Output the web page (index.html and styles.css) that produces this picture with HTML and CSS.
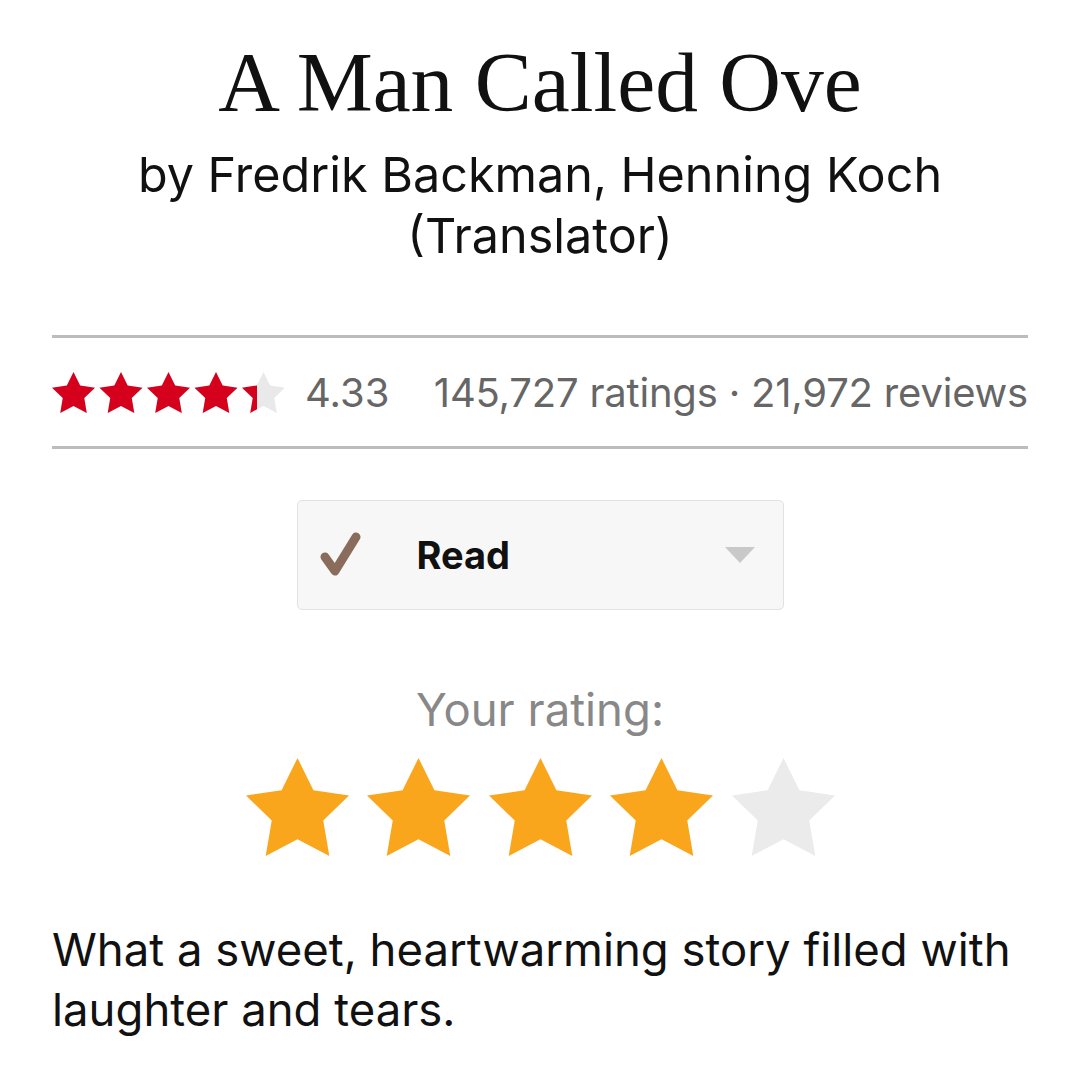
FILE: index.html
```html
<!DOCTYPE html>
<html>
<head>
<meta charset="utf-8">
<link rel="stylesheet" href="styles.css">
</head>
<body>
<div class="page">
  <h1 class="title">A Man Called Ove</h1>
  <p class="authors">by Fredrik Backman, Henning Koch<br>(Translator)</p>

  <div class="stats">
    <svg class="avg-stars" width="232" height="41" viewBox="0 0 232 41">
      <defs>
        <polygon id="ss" points="12,2 15.09,8.26 22,9.27 17,14.14 18.18,21.02 12,17.77 5.82,21.02 7,14.14 2,9.27 8.91,8.26"/>
        <clipPath id="fillclip"><rect x="0" y="0" width="205" height="41"/></clipPath>
      </defs>
      <g fill="#e9e9e9">
        <use href="#ss" transform="translate(-4.3,-4.3) scale(2.15)"/>
        <use href="#ss" transform="translate(43.2,-4.3) scale(2.15)"/>
        <use href="#ss" transform="translate(90.7,-4.3) scale(2.15)"/>
        <use href="#ss" transform="translate(138.2,-4.3) scale(2.15)"/>
        <use href="#ss" transform="translate(185.7,-4.3) scale(2.15)"/>
      </g>
      <g fill="#d5001c" clip-path="url(#fillclip)">
        <use href="#ss" transform="translate(-4.3,-4.3) scale(2.15)"/>
        <use href="#ss" transform="translate(43.2,-4.3) scale(2.15)"/>
        <use href="#ss" transform="translate(90.7,-4.3) scale(2.15)"/>
        <use href="#ss" transform="translate(138.2,-4.3) scale(2.15)"/>
        <use href="#ss" transform="translate(185.7,-4.3) scale(2.15)"/>
      </g>
    </svg>
    <span class="avg">4.33</span>
    <span class="counts">145,727 ratings · 21,972 reviews</span>
  </div>

  <div class="shelf-wrap">
    <div class="shelf">
      <svg class="check" width="44" height="48" viewBox="0 0 44 48">
        <path d="M6 26 L16 40 L37 6" fill="none" stroke="#8a6c5c" stroke-width="9" stroke-linecap="round" stroke-linejoin="round"/>
      </svg>
      <span class="shelf-name">Read</span>
      <svg class="caret" width="30" height="16" viewBox="0 0 30 16">
        <polygon points="0,0 30,0 15,16" fill="#c9c9c9"/>
      </svg>
    </div>
  </div>

  <p class="your-label">Your rating:</p>
  <div class="your-stars">
    <svg class="big-star on" viewBox="2 2 20 19.02" preserveAspectRatio="none"><polygon points="12,2 15.09,8.26 22,9.27 17,14.14 18.18,21.02 12,17.77 5.82,21.02 7,14.14 2,9.27 8.91,8.26"/></svg>
    <svg class="big-star on" viewBox="2 2 20 19.02" preserveAspectRatio="none"><polygon points="12,2 15.09,8.26 22,9.27 17,14.14 18.18,21.02 12,17.77 5.82,21.02 7,14.14 2,9.27 8.91,8.26"/></svg>
    <svg class="big-star on" viewBox="2 2 20 19.02" preserveAspectRatio="none"><polygon points="12,2 15.09,8.26 22,9.27 17,14.14 18.18,21.02 12,17.77 5.82,21.02 7,14.14 2,9.27 8.91,8.26"/></svg>
    <svg class="big-star on" viewBox="2 2 20 19.02" preserveAspectRatio="none"><polygon points="12,2 15.09,8.26 22,9.27 17,14.14 18.18,21.02 12,17.77 5.82,21.02 7,14.14 2,9.27 8.91,8.26"/></svg>
    <svg class="big-star off" viewBox="2 2 20 19.02" preserveAspectRatio="none"><polygon points="12,2 15.09,8.26 22,9.27 17,14.14 18.18,21.02 12,17.77 5.82,21.02 7,14.14 2,9.27 8.91,8.26"/></svg>
  </div>

  <p class="review">What a sweet, heartwarming story filled with laughter and tears.</p>
</div>
</body>
</html>
```

FILE: styles.css
```css
html, body {
  margin: 0;
  padding: 0;
  background: #ffffff;
}

body {
  font-family: Inter, "Noto Sans", sans-serif;
  color: #111111;
}

.page {
  padding: 32px 52px 0;
}

.title {
  margin: 0;
  font-family: "Liberation Serif", "Times New Roman", serif;
  font-weight: normal;
  font-size: 85.5px;
  line-height: 100px;
  text-align: center;
  color: #111;
}

.authors {
  margin: 12px 0 0;
  font-size: 48.5px;
  line-height: 61px;
  text-align: center;
  color: #111;
}

.stats {
  margin-top: 69px;
  border-top: 3px solid #bcbcbc;
  border-bottom: 3px solid #bcbcbc;
  height: 108px;
  display: flex;
  align-items: center;
  color: #666666;
  font-size: 40px;
}

.avg-stars {
  display: block;
  flex: none;
}

.avg {
  margin-left: 21px;
}

.counts {
  margin-left: auto;
  letter-spacing: -0.2px;
}

.shelf-wrap {
  display: flex;
  justify-content: center;
  margin-top: 51px;
}

.shelf {
  width: 485px;
  height: 108px;
  background: #f7f7f7;
  border: 1px solid #e2e2e2;
  border-radius: 5px;
  display: flex;
  align-items: center;
  box-sizing: content-box;
}

.check {
  display: block;
  margin-left: 21px;
}

.shelf-name {
  margin-left: 54px;
  font-weight: 700;
  font-size: 38px;
  color: #111;
}

.caret {
  display: block;
  margin-left: auto;
  margin-right: 28px;
}

.your-label {
  margin: 75px 0 0;
  text-align: center;
  font-size: 45.5px;
  line-height: 50px;
  color: #888888;
}

.your-stars {
  display: flex;
  justify-content: center;
  gap: 18.5px;
  margin-top: 23px;
}

.big-star {
  display: block;
  width: 103px;
  height: 98px;
}

.big-star.on { fill: #f9a61d; }
.big-star.off { fill: #ebebeb; }

.review {
  margin: 64px 0 0;
  font-size: 45.5px;
  line-height: 60px;
  color: #111;
}
```
